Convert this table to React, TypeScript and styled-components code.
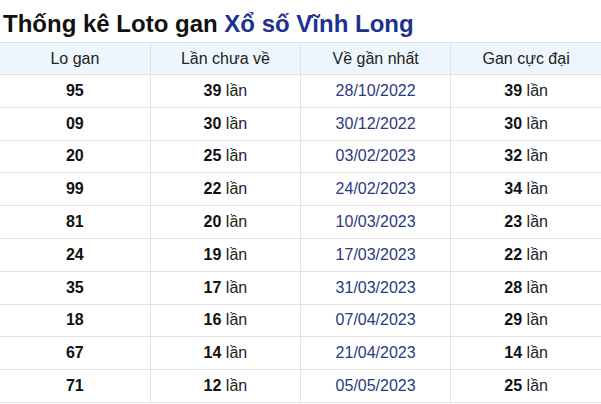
import React from "react";
import styled, { createGlobalStyle } from "styled-components";

const GlobalSt = createGlobalStyle`
  body {
    margin: 0;
    background: #ffffff;
    font-family: "Liberation Sans", Arial, sans-serif;
  }
`;

const Page = styled.div`
  width: 601px;
  height: 404px;
  overflow: hidden;
`;

const Title = styled.h2`
  margin: 0;
  padding: 10px 0 0 3px;
  height: 42px;
  box-sizing: border-box;
  font-size: 24px;
  line-height: 28px;
  font-weight: 700;
  color: #111111;
  white-space: nowrap;
  span {
    color: #1c3190;
  }
`;

const Table = styled.table`
  width: 601px;
  border-collapse: collapse;
  table-layout: fixed;
  th,
  td {
    border: 1px solid #e2e2e2;
    text-align: center;
    padding: 0;
  }
  tr > :first-child {
    border-left: none;
  }
  tr > :last-child {
    border-right: none;
  }
`;

const HeadRow = styled.tr`
  height: 32px;
  background: #eef6fd;
  th {
    font-weight: 400;
    font-size: 16px;
    color: #222222;
  }
`;

const Row = styled.tr`
  height: 32.8px;
  td {
    font-size: 16px;
    color: #222222;
  }
`;

const Num = styled.b`
  font-weight: 700;
  color: #111111;
`;

const DateCell = styled.td`
  && {
    color: #2b3a80;
  }
`;

const rows = [
  ["95", "39", "28/10/2022", "39"],
  ["09", "30", "30/12/2022", "30"],
  ["20", "25", "03/02/2023", "32"],
  ["99", "22", "24/02/2023", "34"],
  ["81", "20", "10/03/2023", "23"],
  ["24", "19", "17/03/2023", "22"],
  ["35", "17", "31/03/2023", "28"],
  ["18", "16", "07/04/2023", "29"],
  ["67", "14", "21/04/2023", "14"],
  ["71", "12", "05/05/2023", "25"],
];

export default function App() {
  return (
    <Page>
      <GlobalSt />
      <Title>
        Thống kê Loto gan <span>Xổ số Vĩnh Long</span>
      </Title>
      <Table>
        <thead>
          <HeadRow>
            <th>Lo gan</th>
            <th>Lần chưa về</th>
            <th>Về gần nhất</th>
            <th>Gan cực đại</th>
          </HeadRow>
        </thead>
        <tbody>
          {rows.map((r) => (
            <Row key={r[0]}>
              <td>
                <Num>{r[0]}</Num>
              </td>
              <td>
                <Num>{r[1]}</Num> lần
              </td>
              <DateCell>{r[2]}</DateCell>
              <td>
                <Num>{r[3]}</Num> lần
              </td>
            </Row>
          ))}
        </tbody>
      </Table>
    </Page>
  );
}
